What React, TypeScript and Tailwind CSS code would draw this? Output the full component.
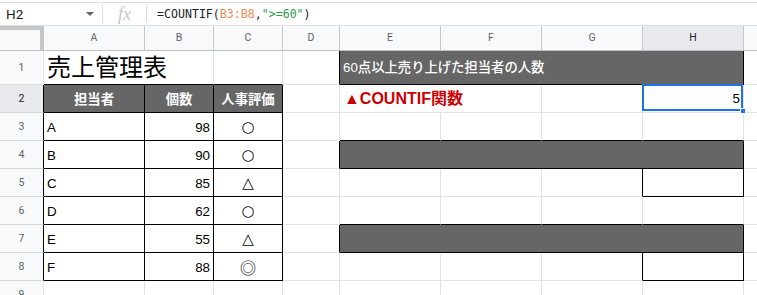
import clsx from 'clsx';
import type { ReactNode } from 'react';

type Edge = 'g' | 'k' | 'n';

const edgeR: Record<Edge, string> = {
  g: 'border-r border-r-[#e2e3e3]',
  k: 'border-r border-r-black',
  n: '',
};
const edgeB: Record<Edge, string> = {
  g: 'border-b border-b-[#e2e3e3]',
  k: 'border-b border-b-black',
  n: '',
};

const columns = ['A', 'B', 'C', 'D', 'E', 'F', 'G', 'H'];

const people = [
  { name: 'A', count: 98, grade: '○' },
  { name: 'B', count: 90, grade: '○' },
  { name: 'C', count: 85, grade: '△' },
  { name: 'D', count: 62, grade: '○' },
  { name: 'E', count: 55, grade: '△' },
  { name: 'F', count: 88, grade: '◎' },
];

// right-side cells for rows 3..8 (D, E..H, I)
const sideRows: { d: Edge; cells: { r: Edge; b: Edge; span?: boolean }[] }[] = [
  { d: 'g', cells: [{ r: 'g', b: 'k' }, { r: 'g', b: 'k' }, { r: 'g', b: 'k' }, { r: 'g', b: 'k' }] },
  { d: 'k', cells: [{ r: 'k', b: 'k', span: true }] },
  { d: 'g', cells: [{ r: 'g', b: 'g' }, { r: 'g', b: 'g' }, { r: 'k', b: 'g' }, { r: 'k', b: 'k' }] },
  { d: 'g', cells: [{ r: 'g', b: 'k' }, { r: 'g', b: 'k' }, { r: 'g', b: 'k' }, { r: 'g', b: 'k' }] },
  { d: 'k', cells: [{ r: 'k', b: 'k', span: true }] },
  { d: 'g', cells: [{ r: 'g', b: 'g' }, { r: 'g', b: 'g' }, { r: 'k', b: 'g' }, { r: 'k', b: 'k' }] },
];

const Cell = ({
  r = 'g',
  b = 'g',
  className,
  children,
}: {
  r?: Edge;
  b?: Edge;
  className?: string;
  children?: ReactNode;
}) => (
  <div
    className={clsx(
      'box-border min-w-0 flex items-center whitespace-nowrap',
      edgeR[r],
      edgeB[b],
      className
    )}
  >
    {children}
  </div>
);

const RowHead = ({ n, edge = 'g', active = false }: { n: number; edge?: Edge; active?: boolean }) => (
  <div
    className={clsx(
      'box-border flex items-center justify-center border-b border-b-[#dadada] text-[10.5px] font-["Roboto",sans-serif]',
      edgeR[edge],
      edge === 'g' && 'border-r-[#c4c4c4]',
      active ? 'bg-[#e8eaed] text-[#202124]' : 'bg-[#f8f9fa] text-[#5f6368]'
    )}
  >
    {n}
  </div>
);

const App = () => {
  return (
    <div className="w-[757px] h-[295px] overflow-hidden bg-white pt-[2px] font-['Liberation_Sans','Noto_Sans_CJK_JP',sans-serif] text-black">
      {/* formula bar */}
      <div className="box-border h-[24px] flex items-center border-y border-y-[#e0e0e0]">
        <div className="w-[102px] flex items-center pl-[6px] pr-[8px]">
          <span className="text-[13.5px] text-[#202124] font-['Roboto',sans-serif]">H2</span>
          <svg className="ml-auto" width="8" height="4" viewBox="0 0 8 4">
            <polygon points="0,0 8,0 4,4" fill="#5f6368" />
          </svg>
        </div>
        <div className="w-px h-[18px] bg-[#dadce0]" />
        <div className="w-[43px] flex justify-center">
          <span className="italic text-[18px] leading-none text-[#c4c7c5] font-['Liberation_Serif',serif]">fx</span>
        </div>
        <div className="w-px h-[16px] bg-[#dadce0]" />
        <div className="pl-[10px] pt-[2px] text-[11.6px] font-['DejaVu_Sans_Mono',monospace] text-[#202124]">
          =COUNTIF(<span className="text-[#ef8a52]">B3:B8</span>,<span className="text-[#2a9a4a]">"&gt;=60"</span>)
        </div>
      </div>

      {/* sheet */}
      <div className="grid grid-cols-[44px_101px_69px_69px_57px_101px_101px_101px_101px_13px] grid-rows-[25px_34px_repeat(9,28px)]">
        {/* column headers */}
        <div className="box-border bg-[#f8f9fa] border-t-[4px] border-t-[#c4c7c5] border-r-[4px] border-r-[#c4c7c5] border-b border-b-[#c0c0c0]" />
        {columns.map((c) => (
          <div
            key={c}
            className={clsx(
              'box-border flex items-center justify-center border-r border-r-[#c7c7c7] border-b border-b-[#c0c0c0] text-[10.5px] font-["Roboto",sans-serif]',
              c === 'H' ? 'bg-[#e8eaed] text-[#202124]' : 'bg-[#f8f9fa] text-[#5f6368]'
            )}
          >
            {c}
          </div>
        ))}
        <div className="box-border bg-[#f8f9fa] border-b border-b-[#c0c0c0]" />

        {/* row 1 */}
        <RowHead n={1} />
        <Cell b="k" className="col-span-2 pl-[3px] pb-[3px]">
          <span className="text-[24px] leading-none font-['Noto_Sans_CJK_JP',sans-serif]">売上管理表</span>
        </Cell>
        <Cell b="k" />
        <Cell r="k" />
        <Cell r="k" b="k" className="col-span-4 bg-[#666666] pl-[3px]">
          <span className="text-[13.33px] font-medium text-white font-['Liberation_Sans','Noto_Sans_CJK_JP',sans-serif]">
            60点以上売り上げた担当者の人数
          </span>
        </Cell>
        <Cell r="n" />

        {/* row 2 */}
        <RowHead n={2} edge="k" active />
        {['担当者', '個数', '人事評価'].map((h) => (
          <Cell key={h} r="k" b="k" className="bg-[#666666] justify-center">
            <span className="text-[13.33px] font-bold text-white font-['Noto_Sans_CJK_JP',sans-serif]">{h}</span>
          </Cell>
        ))}
        <Cell />
        <Cell className="col-span-2 pl-[4px]">
          <span className="text-[16px] font-bold text-[#cc0000] font-['Liberation_Sans','Noto_Sans_CJK_JP',sans-serif]">
            ▲COUNTIF関数
          </span>
        </Cell>
        <Cell />
        <Cell className="relative justify-end pr-[3px]">
          <span className="text-[13.33px] pt-[1px]">5</span>
          <div className="absolute -left-px -top-px right-0 bottom-px border-2 border-[#1a73e8]" />
          <div className="absolute right-[-3px] bottom-[-2px] w-[6px] h-[6px] bg-[#1a73e8] border border-white" />
        </Cell>
        <Cell r="n" />

        {/* rows 3..8 */}
        {people.map((p, i) => {
          const side = sideRows[i];
          return [
            <RowHead key={`h${i}`} n={i + 3} edge="k" />,
            <Cell key={`a${i}`} r="k" b="k" className="pl-[3px] pt-[2px]">
              <span className="text-[13.33px]">{p.name}</span>
            </Cell>,
            <Cell key={`b${i}`} r="k" b="k" className="justify-end pr-[3px] pt-[2px]">
              <span className="text-[13.33px]">{p.count}</span>
            </Cell>,
            <Cell key={`c${i}`} r="k" b="k" className="justify-center pt-[1px]">
              <span
                className={clsx(
                  'leading-none',
                  p.grade === '◎'
                    ? "text-[16px] font-['Noto_Sans_CJK_JP',sans-serif]"
                    : "text-[15px] font-['DejaVu_Sans',sans-serif]"
                )}
              >
                {p.grade}
              </span>
            </Cell>,
            <Cell key={`d${i}`} r={side.d} />,
            ...side.cells.map((c, j) => (
              <Cell
                key={`s${i}${j}`}
                r={c.r}
                b={c.b}
                className={c.span ? 'col-span-4 bg-[#666666]' : undefined}
              />
            )),
            <Cell key={`i${i}`} r="n" />,
          ];
        })}

        {/* row 9 */}
        <RowHead n={9} />
        {columns.map((c) => (
          <Cell key={`r9${c}`} />
        ))}
        <Cell r="n" />
      </div>
    </div>
  );
};

export default App;
